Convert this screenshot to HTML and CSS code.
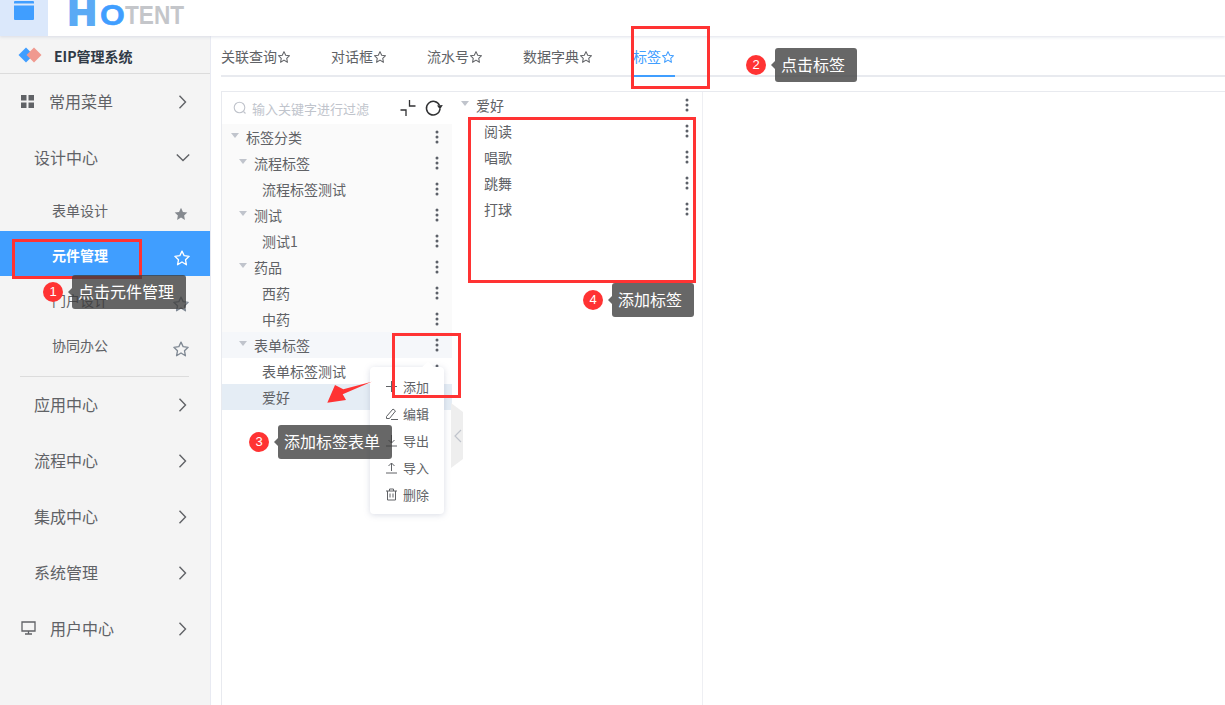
FILE: index.html
```html
<!DOCTYPE html>
<html lang="zh">
<head>
<meta charset="utf-8">
<title>EIP管理系统</title>
<link rel="stylesheet" href="styles.css">
</head>
<body>
<svg class="defs" width="0" height="0" aria-hidden="true">
  <symbol id="star" viewBox="0 0 24 24"><path d="M12 2.800l2.900 6.100 6.600.9-4.800 4.600 1.200 6.600L12 17.300l-5.900 3.700 1.200-6.600L2.500 9.800l6.600-.9z" fill="none" stroke="currentColor" stroke-width="1.800" stroke-linejoin="round"/></symbol>
  <symbol id="starf" viewBox="0 0 24 24"><path d="M12 2.800l2.900 6.100 6.600.9-4.800 4.600 1.200 6.600L12 17.300l-5.900 3.700 1.200-6.600L2.500 9.800l6.600-.9z" fill="currentColor"/></symbol>
  <symbol id="chev" viewBox="0 0 14 14"><path d="M3.500 .8L9.500 7l-6 6.200" fill="none" stroke="currentColor" stroke-width="1.400"/></symbol>
  <symbol id="dots" viewBox="0 0 4 14"><circle cx="2" cy="2" r="1.500"/><circle cx="2" cy="7" r="1.500"/><circle cx="2" cy="12" r="1.500"/></symbol>
  <symbol id="caret" viewBox="0 0 8 6"><path d="M0 0h8L4 5z"/></symbol>
</svg>

<header class="topbar">
  <div class="menu-btn"><svg width="20" height="20" viewBox="0 0 20 20"><path d="M1 0h18a1 1 0 0 1 1 1v1.500H0V1a1 1 0 0 1 1-1zM0 4.500h20V18a1 1 0 0 1-1 1H1a1 1 0 0 1-1-1z" fill="#409eff"/></svg></div>
  <div class="logo"><span class="logo-h">H</span><span class="logo-o">O</span><span class="logo-t">TENT</span></div>
</header>

<div class="layout">
  <aside class="sidebar">
    <div class="brand">
      <svg width="24" height="16" viewBox="0 0 24 16"><path d="M8 .5L15.500 8 8 15.500.5 8z" fill="#409eff"/><path d="M16 .5L23.500 8 16 15.500 8.500 8z" fill="#f0998f"/></svg>
      <span>EIP管理系统</span>
    </div>
    <nav>
      <div class="nav-row nav-icon">
        <svg class="nav-glyph" width="13" height="13" viewBox="0 0 13 13"><path d="M0 0h5.500v5.500H0zM7.500 0H13v5.500H7.500zM0 7.500h5.500V13H0zM7.500 7.500H13V13H7.500z" fill="#606266"/></svg>
        <span class="nav-label">常用菜单</span><svg class="nav-chev"><use href="#chev"/></svg>
      </div>
      <div class="nav-row">
        <span class="nav-label">设计中心</span><svg class="nav-chev open"><use href="#chev"/></svg>
      </div>
      <div class="sub-row"><span>表单设计</span><svg class="sub-star filled"><use href="#starf"/></svg></div>
      <div class="sub-row active"><span>元件管理</span><svg class="sub-star"><use href="#star"/></svg></div>
      <div class="sub-row"><span>门户设计</span><svg class="sub-star"><use href="#star"/></svg></div>
      <div class="sub-row"><span>协同办公</span><svg class="sub-star"><use href="#star"/></svg></div>
      <div class="nav-divider"></div>
      <div class="nav-row"><span class="nav-label">应用中心</span><svg class="nav-chev"><use href="#chev"/></svg></div>
      <div class="nav-row"><span class="nav-label">流程中心</span><svg class="nav-chev"><use href="#chev"/></svg></div>
      <div class="nav-row"><span class="nav-label">集成中心</span><svg class="nav-chev"><use href="#chev"/></svg></div>
      <div class="nav-row"><span class="nav-label">系统管理</span><svg class="nav-chev"><use href="#chev"/></svg></div>
      <div class="nav-row nav-icon">
        <svg class="nav-glyph wide" width="15" height="14" viewBox="0 0 15 14"><path d="M1 1h13v9H1zM7.500 10v3M4 13h7" fill="none" stroke="#606266" stroke-width="1.300"/></svg>
        <span class="nav-label">用户中心</span><svg class="nav-chev"><use href="#chev"/></svg>
      </div>
    </nav>
  </aside>

  <main class="main">
    <div class="tabs">
      <div class="tab">关联查询<svg class="tab-star"><use href="#star"/></svg></div>
      <div class="tab">对话框<svg class="tab-star"><use href="#star"/></svg></div>
      <div class="tab">流水号<svg class="tab-star"><use href="#star"/></svg></div>
      <div class="tab">数据字典<svg class="tab-star"><use href="#star"/></svg></div>
      <div class="tab current">标签<svg class="tab-star"><use href="#star"/></svg></div>
    </div>
    <div class="panel">
      <section class="tree-pane">
        <div class="search">
          <svg class="search-ic" width="14" height="14" viewBox="0 0 14 14"><circle cx="6.500" cy="6.500" r="5.300" fill="none" stroke="#c0c4cc" stroke-width="1.100"/><path d="M10.500 10.500l2 2" stroke="#c0c4cc" stroke-width="1.100"/></svg>
          <span class="placeholder">输入关键字进行过滤</span>
          <svg class="tool-a" width="16" height="16" viewBox="0 0 16 16"><path d="M0.500 10h5.500v6M9.500 0v6h6" fill="none" stroke="#303133" stroke-width="1.300"/></svg>
          <svg class="tool-b" width="18" height="18" viewBox="0 0 18 18"><path d="M14.500 6.500A6.800 6.800 0 1 0 15 10" fill="none" stroke="#303133" stroke-width="1.500"/><path d="M12 6.500L17.800 6 15 10.500z" fill="#303133"/></svg>
        </div>
        <div class="tree">
          <div class="node l1"><svg class="caret"><use href="#caret"/></svg><span>标签分类</span><svg class="dots"><use href="#dots"/></svg></div>
          <div class="node l2"><svg class="caret"><use href="#caret"/></svg><span>流程标签</span><svg class="dots"><use href="#dots"/></svg></div>
          <div class="node l3"><span>流程标签测试</span><svg class="dots"><use href="#dots"/></svg></div>
          <div class="node l2"><svg class="caret"><use href="#caret"/></svg><span>测试</span><svg class="dots"><use href="#dots"/></svg></div>
          <div class="node l3"><span>测试1</span><svg class="dots"><use href="#dots"/></svg></div>
          <div class="node l2"><svg class="caret"><use href="#caret"/></svg><span>药品</span><svg class="dots"><use href="#dots"/></svg></div>
          <div class="node l3"><span>西药</span><svg class="dots"><use href="#dots"/></svg></div>
          <div class="node l3"><span>中药</span><svg class="dots"><use href="#dots"/></svg></div>
          <div class="node l2 hover"><svg class="caret"><use href="#caret"/></svg><span>表单标签</span><svg class="dots"><use href="#dots"/></svg></div>
          <div class="node l3 plain"><span>表单标签测试</span><svg class="dots"><use href="#dots"/></svg></div>
          <div class="node l3 selected"><span>爱好</span></div>
        </div>
      </section>
      <section class="list-pane">
        <div class="list-head"><svg class="caret"><use href="#caret"/></svg><span>爱好</span><svg class="dots"><use href="#dots"/></svg></div>
        <div class="list-item"><span>阅读</span><svg class="dots"><use href="#dots"/></svg></div>
        <div class="list-item"><span>唱歌</span><svg class="dots"><use href="#dots"/></svg></div>
        <div class="list-item"><span>跳舞</span><svg class="dots"><use href="#dots"/></svg></div>
        <div class="list-item"><span>打球</span><svg class="dots"><use href="#dots"/></svg></div>
      </section>
      <section class="blank-pane"></section>
    </div>
  </main>
</div>

<div class="handle"><svg width="9" height="14" viewBox="0 0 9 14"><path d="M8 1L2 7l6 6" fill="none" stroke="#c0c4cc" stroke-width="1.200"/></svg></div>

<div class="popover">
  <i class="pop-arrow"></i>
  <div class="pop-item"><svg width="13" height="13" viewBox="0 0 13 13"><path d="M6.500 1v11M1 6.500h11" stroke="#606266"/></svg>添加</div>
  <div class="pop-item"><svg width="13" height="13" viewBox="0 0 13 13"><path d="M1.500 9.500L8 2l2.500 2L4.500 11.500H1.500zM6 12.500h7" fill="none" stroke="#606266"/></svg>编辑</div>
  <div class="pop-item"><svg width="13" height="13" viewBox="0 0 13 13"><path d="M6.500 1v8M3.500 6l3 3 3-3M1 12h11" fill="none" stroke="#606266"/></svg>导出</div>
  <div class="pop-item"><svg width="13" height="13" viewBox="0 0 13 13"><path d="M6.500 10V2M3.500 5l3-3 3 3M1 12h11" fill="none" stroke="#606266"/></svg>导入</div>
  <div class="pop-item"><svg width="13" height="13" viewBox="0 0 13 13"><path d="M1 3h11M4.500 3V1h4v2M2.500 3v9h8V3M5 5.500v4M8 5.500v4" fill="none" stroke="#606266"/></svg>删除</div>
</div>

<svg class="red-arrow" width="50" height="26" viewBox="0 0 50 26"><path d="M45.700 1.700L17.300 9.300 9 5 1.300 22.700 20 20l-3.300-5.700z" fill="#f33"/></svg>

<div class="mark m1"></div>
<div class="mark m2"></div>
<div class="mark m3"></div>
<div class="mark m4"></div>

<div class="tip t1"><b class="num">1</b><span class="bubble">点击元件管理</span></div>
<div class="tip t2"><b class="num">2</b><span class="bubble">点击标签</span></div>
<div class="tip t3"><b class="num">3</b><span class="bubble">添加标签表单</span></div>
<div class="tip t4"><b class="num">4</b><span class="bubble">添加标签</span></div>
</body>
</html>
```

FILE: styles.css
```css
* { box-sizing: border-box; }
html, body { margin: 0; height: 100%; }
body {
  width: 1225px;
  height: 705px;
  overflow: hidden;
  position: relative;
  background: #fff;
  color: #606266;
  font-family: "Noto Sans CJK SC", "Liberation Sans", sans-serif;
  font-size: 14px;
}
.defs { position: absolute; }

/* top bar */
.topbar {
  height: 36px;
  display: flex;
  overflow: hidden;
  background: #fff;
  box-shadow: 0 1px 3px rgba(200, 205, 220, .6);
  position: relative;
  z-index: 1;
}
.menu-btn {
  width: 48px;
  background: #dbe8fb;
  display: flex;
  justify-content: center;
  padding-top: 1px;
}
.logo {
  margin-left: 20px;
  display: flex;
  align-items: baseline;
  height: 25px;
  font-family: "Liberation Sans", sans-serif;
  font-weight: 700;
  line-height: 25px;
}
.logo-h {
  display: inline-block;
  width: 32px;
  font-size: 35px;
  color: #5aaaf5;
  -webkit-text-stroke: 2px #5aaaf5;
  transform: scaleX(1.12);
  transform-origin: left bottom;
}
.logo-o {
  display: inline-block;
  width: 25px;
  font-size: 30px;
  color: #409eff;
  -webkit-text-stroke: .6px #409eff;
  transform: scaleX(1.06);
  transform-origin: left bottom;
}
.logo-t {
  display: inline-block;
  width: 60px;
  font-size: 26px;
  color: #c4c6ca;
  white-space: nowrap;
  transform: translateY(-1px) scaleX(.87);
  transform-origin: left bottom;
}

.layout { display: flex; height: 669px; }

/* sidebar */
.sidebar {
  width: 211px;
  flex: none;
  background: #f4f4f4;
  border-right: 1px solid #e8eaf2;
}
.brand {
  height: 38px;
  display: flex;
  align-items: center;
  gap: 12px;
  padding-left: 18px;
  border-bottom: 1px solid #dcdcdc;
  font-weight: 700;
  font-size: 14px;
  color: #303a46;
}
.brand span { padding-top: 2px; }
.nav-row {
  height: 56px;
  display: flex;
  align-items: center;
  padding: 0 0 2px 34px;
  font-size: 16px;
}
.nav-icon { padding-left: 21px; }
.nav-glyph { flex: none; margin-right: 15px; }
.nav-glyph.wide { margin-right: 14px; }
.nav-label { flex: 1; }
.nav-chev { width: 14px; height: 14px; margin-right: 20px; color: #606266; flex: none; margin-top: 2px; }
.nav-chev.open { transform: rotate(90deg); }
.sub-row {
  height: 45px;
  padding: 5px 20px 0 52px;
  display: flex;
  align-items: center;
  justify-content: space-between;
  font-size: 14px;
}
.sub-row span { padding-bottom: 2px; }
.sub-star { width: 18px; height: 18px; color: #7f8893; flex: none; margin-top: 6px; }
.sub-star.filled { color: #85898f; width: 16px; height: 16px; margin-right: 1px; }
.sub-row.active { background: #409eff; color: #fff; font-weight: 700; }
.sub-row.active .sub-star { color: #fff; margin-top: 4px; margin-right: -1px; }
.nav-divider { height: 1px; margin: 10px 21px 0 20px; background: #dcdcdc; }

/* main */
.main { flex: 1; min-width: 0; padding-left: 10px; }
.tabs {
  height: 40px;
  margin-top: 1px;
  display: flex;
  border-bottom: 2px solid #e8eaef;
}
.tab {
  margin-right: 40px;
  height: 40px;
  padding-top: 7px;
  display: flex;
  align-items: flex-start;
  line-height: 24px;
  font-size: 14px;
  color: #606266;
  border-bottom: 2px solid transparent;
  flex: none;
}
.tab-star { width: 14px; height: 14px; margin-top: 6px; color: #606266; }
.tab.current { color: #409eff; border-bottom-color: #409eff; }
.tab.current .tab-star { color: #409eff; }

.panel {
  margin-top: 14px;
  height: 620px;
  display: flex;
  border-top: 1px solid #e8eaef;
  border-left: 1px solid #e8eaef;
}
.tree-pane { width: 230px; flex: none; }
.search { height: 32px; display: flex; align-items: center; padding-left: 11px; }
.search-ic { flex: none; margin-right: 5px; }
.placeholder { font-size: 13px; color: #c0c4cc; width: 147px; flex: none; }
.tool-a { margin-left: 1px; flex: none; }
.tool-b { margin-left: 9px; flex: none; }

.node {
  height: 26px;
  display: flex;
  align-items: center;
  background: #fafafa;
}
.node span { flex: 1; }
.l1 { padding-left: 9px; }
.l2 { padding-left: 17px; }
.l3 { padding-left: 40px; }
.caret { width: 8px; height: 6px; fill: #c0c4cc; margin-right: 7px; margin-top: -2px; flex: none; }
.node .dots { margin-right: 13px; }
.dots { width: 4px; height: 14px; fill: #5c6068; flex: none; }
.hover { background: #f5f7fa; }
.plain { background: #fff; }
.selected { background: #e5edf5; }

.list-pane { width: 251px; flex: none; border-right: 1px solid #eeeff3; padding: 0 13px 0 9px; }
.list-head, .list-item { height: 26px; display: flex; align-items: center; }
.list-head span, .list-item span { flex: 1; }
.list-item { padding-left: 23px; }
.blank-pane { flex: 1; }

/* floating context menu */
.popover {
  position: absolute;
  left: 370px;
  top: 367px;
  width: 74px;
  height: 147px;
  padding-top: 6px;
  background: #fff;
  border-radius: 4px;
  box-shadow: 0 1px 6px rgba(120, 130, 160, .28);
  z-index: 3;
  font-size: 13px;
}
.pop-arrow {
  position: absolute;
  top: -4px;
  left: 54px;
  width: 8px;
  height: 8px;
  background: #fff;
  transform: rotate(45deg);
}
.pop-item { height: 27px; display: flex; align-items: center; gap: 5px; padding-left: 15px; position: relative; }
.handle {
  position: absolute;
  left: 451px;
  top: 403px;
  width: 12px;
  height: 65px;
  background: #eeeeee;
  clip-path: polygon(0 0, 100% 14%, 100% 86%, 0 100%);
  display: flex;
  align-items: center;
  justify-content: center;
  z-index: 2;
}
.red-arrow { position: absolute; left: 326px; top: 380px; z-index: 4; }

/* annotations */
.mark { position: absolute; border: 3px solid #ff3333; z-index: 5; }
.m1 { left: 12px; top: 239px; width: 130px; height: 40px; }
.m2 { left: 631px; top: 26px; width: 79px; height: 63px; }
.m3 { left: 392px; top: 333px; width: 69px; height: 65px; }
.m4 { left: 468px; top: 117px; width: 228px; height: 166px; }

.tip { position: absolute; display: flex; align-items: center; z-index: 6; }
.t1 { left: 43px; top: 275px; }
.t2 { left: 746px; top: 48px; }
.t3 { left: 249px; top: 425px; }
.t4 { left: 583px; top: 283px; }
.num {
  width: 20px;
  height: 20px;
  border-radius: 50%;
  background: #ff3333;
  color: #fff;
  font-family: "Liberation Sans", sans-serif;
  font-weight: 400;
  font-size: 13px;
  line-height: 20px;
  text-align: center;
  margin-right: 9px;
}
.bubble {
  position: relative;
  height: 34px;
  padding: 0 12px 0 6px;
  border-radius: 3px;
  background: rgba(60, 60, 60, .78);
  color: #fff;
  font-size: 16px;
  line-height: 33px;
  white-space: nowrap;
}
.bubble::before {
  content: "";
  position: absolute;
  left: -4px;
  top: 13px;
  width: 0;
  height: 0;
  border-style: solid;
  border-width: 4px 4px 4px 0;
  border-color: transparent #666 transparent transparent;
}
```
